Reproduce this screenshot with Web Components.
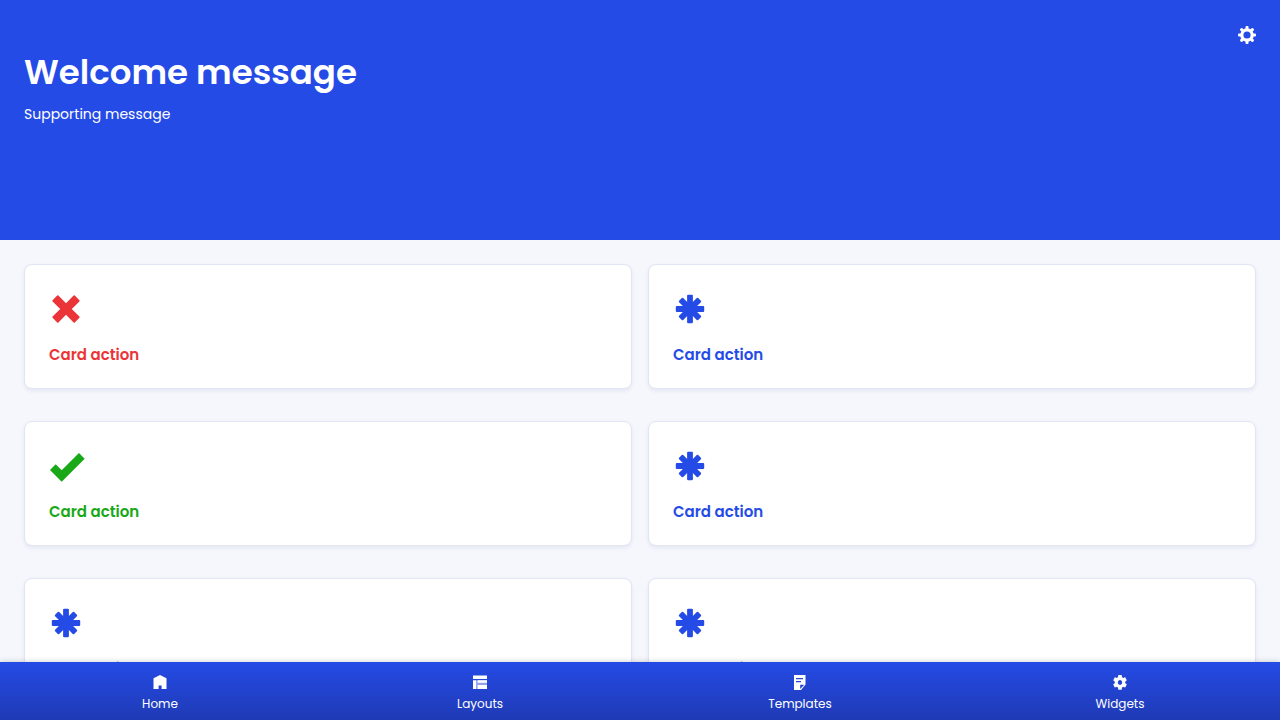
<!DOCTYPE html>
<html lang="en">
<head>
<meta charset="utf-8">
<meta name="viewport" content="width=device-width, initial-scale=1">
<title>Welcome message</title>
<style>
  html, body { margin: 0; height: 100%; }
  body { font-family: Poppins, Inter, sans-serif; background: #f5f7fc; }
</style>
</head>
<body>
<app-shell>
  <welcome-banner slot="banner" heading="Welcome message" message="Supporting message"></welcome-banner>
  <action-card icon="cross">Card action</action-card>
  <action-card icon="asterisk">Card action</action-card>
  <action-card icon="check">Card action</action-card>
  <action-card icon="asterisk">Card action</action-card>
  <action-card icon="asterisk">Card action</action-card>
  <action-card icon="asterisk">Card action</action-card>
  <bottom-nav slot="nav">
    <nav-item icon="home">Home</nav-item>
    <nav-item icon="layouts">Layouts</nav-item>
    <nav-item icon="templates">Templates</nav-item>
    <nav-item icon="widgets">Widgets</nav-item>
  </bottom-nav>
</app-shell>

<script>
  // Eight-toothed gear with a round hole, centred on (9, 9).
  const teeth = Array.from({ length: 8 }, (_, i) =>
    `<rect x="7.5" y="0" width="3" height="4" rx="1" transform="rotate(${i * 45} 9 9)"/>`).join('');
  const gear = `${teeth}<circle cx="9" cy="9" r="5.2" fill="none" stroke="currentColor" stroke-width="3.2"/>`;

  const cardIcons = {
    cross: { color: '#eb3437', art: '<path d="M3.6 11.2 8.2 6.6Q8.8 6 9.4 6.6L17 14.2 24.6 6.6Q25.2 6 25.8 6.6L30.4 11.2Q31 11.8 30.4 12.4L22.8 20 30.4 27.6Q31 28.2 30.4 28.8L25.8 33.4Q25.2 34 24.6 33.4L17 25.8 9.4 33.4Q8.8 34 8.2 33.4L3.6 28.8Q3 28.2 3.6 27.6L11.2 20 3.6 12.4Q3 11.8 3.6 11.2Z"/>' },
    check: { color: '#18a818', art: '<path d="M1 24 6.7 18.3 12.7 24.3 30 7 35.7 12.7 12.7 35.7Z"/>' },
    asterisk: { color: '#254be6', art: [0, 45, 90, 135].map(a => {
      const r = a % 90 ? 13.5 : 14.2;
      return `<rect x="14.1" y="${20 - r}" width="5.8" height="${r * 2}" rx="1" transform="rotate(${a} 17 20)"/>`;
    }).join('') }
  };

  const navIcons = {
    home: '<path d="M1.5 4.2 8 1l6.5 3.2V15H9.6v-3.6H6.6V15H1.5Z"/>',
    layouts: '<path d="M1 1.4h14V5H1ZM1 6.3h3.3V15H1ZM5.6 6.3H15v2.4H5.6ZM5.6 11H15v4H5.6Z"/><path d="M4.3 6.3H15V15H4.3Z" opacity=".5"/>',
    templates: '<path fill-rule="evenodd" d="M2 1h11.5v9.4L9 16H2ZM4 4v1.2h7V4ZM4 7v1.2h5V7ZM8.2 10.8v4.2l4-4.2Z"/>',
    widgets: '<path transform="translate(8 8.4) scale(.72 .77) translate(-12 -12)" d="M19.14 12.94c.04-.3.06-.61.06-.94 0-.32-.02-.64-.07-.94l2.03-1.58c.18-.14.23-.41.12-.61l-1.92-3.32c-.12-.22-.37-.29-.59-.22l-2.39.96c-.5-.38-1.03-.7-1.62-.94l-.36-2.54c-.04-.24-.24-.41-.48-.41h-3.84c-.24 0-.43.17-.47.41l-.36 2.54c-.59.24-1.13.57-1.62.94l-2.39-.96c-.22-.08-.47 0-.59.22L2.74 8.87c-.12.21-.08.47.12.61l2.03 1.58c-.05.3-.09.63-.09.94s.02.64.07.94l-2.03 1.58c-.18.14-.23.41-.12.61l1.92 3.32c.12.22.37.29.59.22l2.39-.96c.5.38 1.03.7 1.62.94l.36 2.54c.05.24.24.41.48.41h3.84c.24 0 .44-.17.47-.41l.36-2.54c.59-.24 1.13-.56 1.62-.94l2.39.96c.22.08.47 0 .59-.22l1.92-3.32c.12-.22.07-.47-.12-.61l-2.01-1.58zM12 15.2c-1.7 0-3-1.5-3-3.2s1.3-3.2 3-3.2 3 1.5 3 3.2-1.3 3.2-3 3.2z"/>'
  };

  class AppShell extends HTMLElement {
    constructor() {
      super();
      this.attachShadow({ mode: 'open' }).innerHTML = `
        <style>
          :host { display: flex; flex-direction: column; height: 100vh; }
          .scroll { flex: 1; min-height: 0; overflow-y: auto; scrollbar-width: none; }
          main { display: grid; grid-template-columns: repeat(2, minmax(0, 1fr)); gap: 32px 16px; padding: 24px; }
        </style>
        <div class="scroll">
          <slot name="banner"></slot>
          <main><slot></slot></main>
        </div>
        <slot name="nav"></slot>`;
    }
  }

  class WelcomeBanner extends HTMLElement {
    connectedCallback() {
      this.attachShadow({ mode: 'open' }).innerHTML = `
        <style>
          :host { display: flex; justify-content: space-between; align-items: flex-start; box-sizing: border-box;
            min-height: 240px; padding: 24px; background: #254be6; color: #fff; }
          .copy { padding-top: 24px; }
          h1 { margin: 0; font-size: 34px; line-height: 48px; font-weight: 600; }
          p { margin: 8px 0 0; font-size: 14px; line-height: 20px; }
          button { display: block; padding: 0; border: 0; background: none; color: inherit; cursor: pointer; }
          svg { display: block; width: 18px; height: 22px; fill: currentColor; }
        </style>
        <div class="copy"><h1></h1><p></p></div>
        <button type="button" aria-label="Settings"><svg viewBox="0 -2 18 22">${gear}</svg></button>`;
      this.shadowRoot.querySelector('h1').textContent = this.getAttribute('heading');
      this.shadowRoot.querySelector('p').textContent = this.getAttribute('message');
    }
  }

  class ActionCard extends HTMLElement {
    connectedCallback() {
      const icon = cardIcons[this.getAttribute('icon')];
      this.attachShadow({ mode: 'open' }).innerHTML = `
        <style>
          :host { display: block; }
          button { display: flex; flex-direction: column; align-items: flex-start; gap: 17px; box-sizing: border-box;
            width: 100%; padding: 24px; border: 1px solid #e1e5f4; border-radius: 8px; background: #fff;
            box-shadow: 0 2px 4px rgba(30, 50, 120, .08); font: 600 15px/18px Poppins, Inter, sans-serif;
            color: ${icon.color}; text-align: left; cursor: pointer; }
          svg { display: block; width: 36px; height: 40px; fill: currentColor; }
        </style>
        <button type="button"><svg viewBox="0 0 36 40" aria-hidden="true">${icon.art}</svg><slot></slot></button>`;
    }
  }

  class BottomNav extends HTMLElement {
    constructor() {
      super();
      this.attachShadow({ mode: 'open' }).innerHTML = `
        <style>
          :host { display: block; position: relative; z-index: 1; }
          nav { display: grid; grid-template-columns: repeat(4, 1fr); background: linear-gradient(#254be6, #1f3ab5);
            box-shadow: 0 0 6px rgba(0, 0, 0, .2); color: #fff; }
        </style>
        <nav><slot></slot></nav>`;
    }
  }

  class NavItem extends HTMLElement {
    connectedCallback() {
      this.attachShadow({ mode: 'open' }).innerHTML = `
        <style>
          :host { display: block; }
          a { display: flex; flex-direction: column; align-items: center; gap: 5px; padding: 12px 0 7px;
            color: inherit; font-size: 12px; line-height: 18px; text-decoration: none; }
          svg { display: block; width: 16px; height: 16px; fill: currentColor; }
        </style>
        <a href="#${this.getAttribute('icon')}"><svg viewBox="0 0 16 16" aria-hidden="true">${navIcons[this.getAttribute('icon')]}</svg><slot></slot></a>`;
    }
  }

  customElements.define('app-shell', AppShell);
  customElements.define('welcome-banner', WelcomeBanner);
  customElements.define('action-card', ActionCard);
  customElements.define('bottom-nav', BottomNav);
  customElements.define('nav-item', NavItem);
</script>
</body>
</html>
